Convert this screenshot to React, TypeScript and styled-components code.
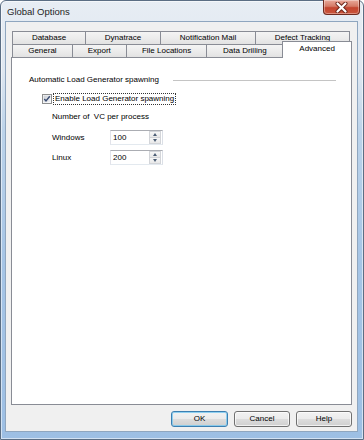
import styled, { createGlobalStyle } from 'styled-components';

const GlobalStyle = createGlobalStyle`
  html, body {
    margin: 0;
    padding: 0;
    background: #fff;
  }
  body {
    font-family: 'Liberation Sans', Arial, sans-serif;
  }
  * {
    box-sizing: border-box;
  }
`;

const topTabs = [
  { label: 'Database', width: 74 },
  { label: 'Dynatrace', width: 76 },
  { label: 'Notification Mail', width: 96 },
  { label: 'Defect Tracking', width: 95 },
];

const bottomTabs = [
  { label: 'General', width: 61 },
  { label: 'Export', width: 55 },
  { label: 'File Locations', width: 82 },
  { label: 'Data Drilling', width: 77 },
];

const fields = [
  { label: 'Windows', value: '100' },
  { label: 'Linux', value: '200' },
];

const CloseIcon = () => (
  <svg width="13" height="11" viewBox="0 0 13 11">
    <path d="M2.5 1.5 L10.5 9.5 M10.5 1.5 L2.5 9.5" stroke="#6b2418" strokeWidth="4" strokeLinecap="round" />
    <path d="M2.5 1.5 L10.5 9.5 M10.5 1.5 L2.5 9.5" stroke="#fff" strokeWidth="2.2" strokeLinecap="round" />
  </svg>
);

const CheckIcon = () => (
  <svg width="10" height="10" viewBox="0 0 10 10">
    <defs>
      <linearGradient id="cbfill" x1="0" y1="0" x2="1" y2="1">
        <stop offset="0" stopColor="#cbcfd5" />
        <stop offset="1" stopColor="#f4f5f7" />
      </linearGradient>
    </defs>
    <rect x="0.5" y="0.5" width="9" height="9" fill="#fff" stroke="#8e8f8f" />
    <rect x="1.5" y="1.5" width="7" height="7" fill="url(#cbfill)" />
    <path d="M2.3 5 L4 7 L7.8 2.2" fill="none" stroke="#3a4c72" strokeWidth="1.4" />
  </svg>
);

const App = () => (
  <>
    <GlobalStyle />
    <Window>
      <TitleBar>
        <Title>Global Options</Title>
        <CloseButton>
          <CloseIcon />
        </CloseButton>
      </TitleBar>
      <Client>
        <TabArea>
          <TabRow>
            {topTabs.map((t) => (
              <Tab key={t.label} $width={t.width}>
                {t.label}
              </Tab>
            ))}
          </TabRow>
          <TabRow>
            {bottomTabs.map((t) => (
              <Tab key={t.label} $width={t.width}>
                {t.label}
              </Tab>
            ))}
            <SelectedTab $width={70}>Advanced</SelectedTab>
          </TabRow>
        </TabArea>
        <Panel>
          <GroupHeader>
            <span>Automatic Load Generator spawning</span>
            <GroupRule />
          </GroupHeader>
          <CheckRow>
            <CheckIcon />
            <CheckLabel>Enable Load Generator spawning</CheckLabel>
          </CheckRow>
          <Settings>
            <Caption>{'Number of  VC per process'}</Caption>
            <FieldGrid>
              {fields.map((f) => (
                <FieldRow key={f.label}>
                  <FieldLabel>{f.label}</FieldLabel>
                  <SpinBox>
                    <SpinInput defaultValue={f.value} readOnly />
                    <SpinButtons>
                      <SpinButton>
                        <Arrow $dir="up" />
                      </SpinButton>
                      <SpinButton>
                        <Arrow $dir="down" />
                      </SpinButton>
                    </SpinButtons>
                  </SpinBox>
                </FieldRow>
              ))}
            </FieldGrid>
          </Settings>
        </Panel>
        <ButtonRow>
          <DialogButton $primary $width={57}>OK</DialogButton>
          <DialogButton $width={56}>Cancel</DialogButton>
          <DialogButton $width={56}>Help</DialogButton>
        </ButtonRow>
      </Client>
    </Window>
  </>
);

export default App;

const Window = styled.div`
  width: 364px;
  height: 440px;
  display: flex;
  flex-direction: column;
  border: 1px solid #5b6e84;
  border-radius: 6px 6px 0 0;
  padding: 0 5px 7px 4px;
  background: linear-gradient(
    180deg,
    #e7edf4 0px,
    #dfe7f0 70px,
    #bcd3ea 130px,
    #a6c5e6 260px,
    #9dbfe4 440px
  );
  box-shadow: inset 0 0 0 1px rgba(255, 255, 255, 0.55);
`;

const TitleBar = styled.div`
  height: 20px;
  display: flex;
  align-items: flex-start;
`;

const Title = styled.div`
  padding: 5px 0 0 2px;
  font-size: 9.5px;
  line-height: 11px;
  color: #1e1e1e;
`;

const CloseButton = styled.div`
  margin: -1px -2px 0 auto;
  width: 37px;
  height: 15px;
  display: flex;
  align-items: center;
  justify-content: center;
  border: 1px solid #6e2a1f;
  border-top: none;
  border-radius: 0 0 4px 4px;
  background: linear-gradient(180deg, #e9a99a 0%, #d47a66 45%, #c4452f 55%, #c9553c 100%);
  box-shadow: inset 0 0 0 1px rgba(255, 255, 255, 0.35);
`;

const Client = styled.div`
  flex: 1;
  display: flex;
  flex-direction: column;
  border: 1px solid #8fa6bf;
  background: #f0f0f0;
  padding: 9px 5px 4px 5px;
  font-size: 8px;
  color: #000;
`;

const TabArea = styled.div`
  display: flex;
  flex-direction: column;
  padding-left: 1px;
`;

const TabRow = styled.div`
  display: flex;
  align-items: flex-end;
  height: 13px;
`;

const Tab = styled.div<{ $width: number }>`
  width: ${({ $width }) => $width}px;
  height: 13px;
  display: flex;
  align-items: center;
  justify-content: center;
  border: 1px solid #898c95;
  border-bottom: none;
  background: linear-gradient(180deg, #f4f4f4 0%, #ececec 50%, #e2e2e2 100%);
  line-height: 1;
  white-space: nowrap;

  & + & {
    margin-left: -1px;
  }
`;

const SelectedTab = styled(Tab)`
  position: relative;
  z-index: 1;
  height: 17px;
  margin-bottom: -1px;
  padding-bottom: 2px;
  background: #fff;
`;

const Panel = styled.div`
  flex: 1;
  background: #fff;
  border: 1px solid #898c95;
  padding: 17px 15px 0 17px;
`;

const GroupHeader = styled.div`
  display: flex;
  align-items: center;
  gap: 14px;
  height: 10px;
  line-height: 10px;
  white-space: nowrap;
`;

const GroupRule = styled.div`
  flex: 1;
  height: 1px;
  background: #c4c4c4;
`;

const CheckRow = styled.div`
  display: flex;
  align-items: center;
  gap: 1px;
  height: 12px;
  margin-top: 8px;
  padding-left: 13px;
`;

const CheckLabel = styled.span`
  height: 12px;
  line-height: 10px;
  padding: 0 1px;
  border: 1px dotted #333;
  white-space: nowrap;
`;

const Settings = styled.div`
  margin-top: 7px;
  padding-left: 23px;
`;

const Caption = styled.div`
  height: 10px;
  line-height: 10px;
  white-space: pre;
`;

const FieldGrid = styled.div`
  display: flex;
  flex-direction: column;
  gap: 5px;
  margin-top: 8px;
`;

const FieldRow = styled.div`
  display: grid;
  grid-template-columns: 58px 53px;
  align-items: center;
`;

const FieldLabel = styled.span`
  line-height: 10px;
`;

const SpinBox = styled.div`
  display: flex;
  height: 15px;
  border: 1px solid;
  border-color: #abadb3 #dbdfe6 #e3e9ef #e2e3ea;
  background: #fff;
`;

const SpinInput = styled.input`
  flex: 1;
  min-width: 0;
  border: none;
  outline: none;
  background: transparent;
  padding: 0 0 0 2px;
  font-family: 'Liberation Sans', Arial, sans-serif;
  font-size: 8px;
  color: #000;
`;

const SpinButtons = styled.div`
  width: 13px;
  display: flex;
  flex-direction: column;
  padding: 0 1px 0 0;
`;

const SpinButton = styled.div`
  flex: 1;
  display: flex;
  align-items: center;
  justify-content: center;
  border: 1px solid #d3d5d9;
  background: linear-gradient(180deg, #f7f7f7 0%, #e8e8e8 100%);

  & + & {
    margin-top: -1px;
  }
`;

const Arrow = styled.span<{ $dir: 'up' | 'down' }>`
  width: 0;
  height: 0;
  border-left: 2.5px solid transparent;
  border-right: 2.5px solid transparent;
  ${({ $dir }) =>
    $dir === 'up' ? 'border-bottom: 3px solid #4d5e75;' : 'border-top: 3px solid #4d5e75;'}
`;

const ButtonRow = styled.div`
  display: flex;
  justify-content: flex-end;
  gap: 6px;
  margin-top: 6px;
`;

const DialogButton = styled.button<{ $primary?: boolean; $width: number }>`
  width: ${({ $width }) => $width}px;
  height: 16px;
  padding: 0;
  border: 1px solid ${({ $primary }) => ($primary ? '#3c7fb1' : '#707070')};
  border-radius: 3px;
  background: linear-gradient(180deg, #f2f2f2 0%, #ebebeb 50%, #dddddd 51%, #cfcfcf 100%);
  box-shadow: inset 0 0 0 1px
    ${({ $primary }) => ($primary ? 'rgba(120, 200, 240, 0.8)' : 'rgba(255, 255, 255, 0.7)')};
  font-family: 'Liberation Sans', Arial, sans-serif;
  font-size: 8px;
  color: #000;
  line-height: 1;
`;
